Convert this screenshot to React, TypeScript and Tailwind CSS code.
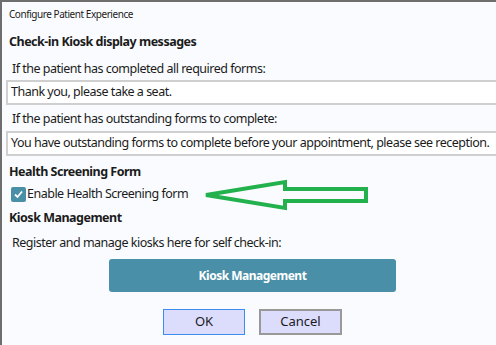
import React from "react";

export default function App() {
  return (
    <div
      className="relative w-[496px] h-[345px] overflow-hidden bg-[#fafbfe] text-[#1b1b1b] border-t-2 border-l-2 border-[#6e6e6e]"
      style={{ fontFamily: '"Noto Sans", "Open Sans", sans-serif' }}
    >
      <div className="flex flex-col text-[12.5px] tracking-[-0.5px]">
        <div className="h-[24px] flex items-center pl-[7px] text-[10px] tracking-[-0.45px]">Configure Patient Experience</div>
        <div className="h-[32px] flex items-center pl-[7px] font-bold">Check-in Kiosk display messages</div>
        <div className="h-[22px] flex items-center pl-[10px]">If the patient has completed all required forms:</div>
        <div className="ml-[4px] h-[25px] flex items-center pl-[3px] border-y-2 border-l-2 border-[#cfcfcf] bg-white">Thank you, please take a seat.</div>
        <div className="h-[26px] flex items-center pt-[3px] pl-[10px]">If the patient has outstanding forms to complete:</div>
        <div className="ml-[4px] h-[25px] flex items-center pl-[3px] border-y-2 border-l-2 border-[#cfcfcf] bg-white whitespace-nowrap">You have outstanding forms to complete before your appointment, please see reception.</div>
        <div className="h-[27px] flex items-end pb-[1px] pl-[7px] font-bold">Health Screening Form</div>
        <div className="h-[23px] flex items-center pl-[9px]">
          <span className="w-[15px] h-[15px] rounded-[2px] bg-[#4a8fa8] flex items-center justify-center mr-[1px]">
            <svg width="11" height="11" viewBox="0 0 11 11"><path d="M2 5.5 L4.5 8 L9 2.5" stroke="white" strokeWidth="1.8" fill="none" /></svg>
          </span>
          Enable Health Screening form
        </div>
        <div className="h-[25px] flex items-center pl-[7px] font-bold">Kiosk Management</div>
        <div className="h-[24px] flex items-center pl-[10px]">Register and manage kiosks here for self check-in:</div>
        <div className="pt-[4px] pl-[107px]">
          <div className="w-[287px] h-[33px] rounded-[3px] bg-[#4a8fa8] text-white font-bold text-[12px] flex items-center justify-center">Kiosk Management</div>
        </div>
        <div className="pt-[17px] pl-[161px] flex gap-[14px] tracking-normal">
          <div className="w-[82px] h-[26px] bg-[#dcdcfd] border border-[#3d8cf0] flex items-center justify-center text-[13px]">OK</div>
          <div className="w-[83px] h-[26px] bg-[#dcdcfd] border-2 border-[#999999] flex items-center justify-center text-[13px]">Cancel</div>
        </div>
      </div>
      <svg className="absolute left-0 top-0" width="496" height="345" style={{ pointerEvents: "none" }}>
        <polygon points="204,193 283,180 283,187 364,187 364,199 283,199 283,206" fill="none" stroke="#22b14c" strokeWidth="4" strokeLinejoin="miter" />
      </svg>
    </div>
  );
}
